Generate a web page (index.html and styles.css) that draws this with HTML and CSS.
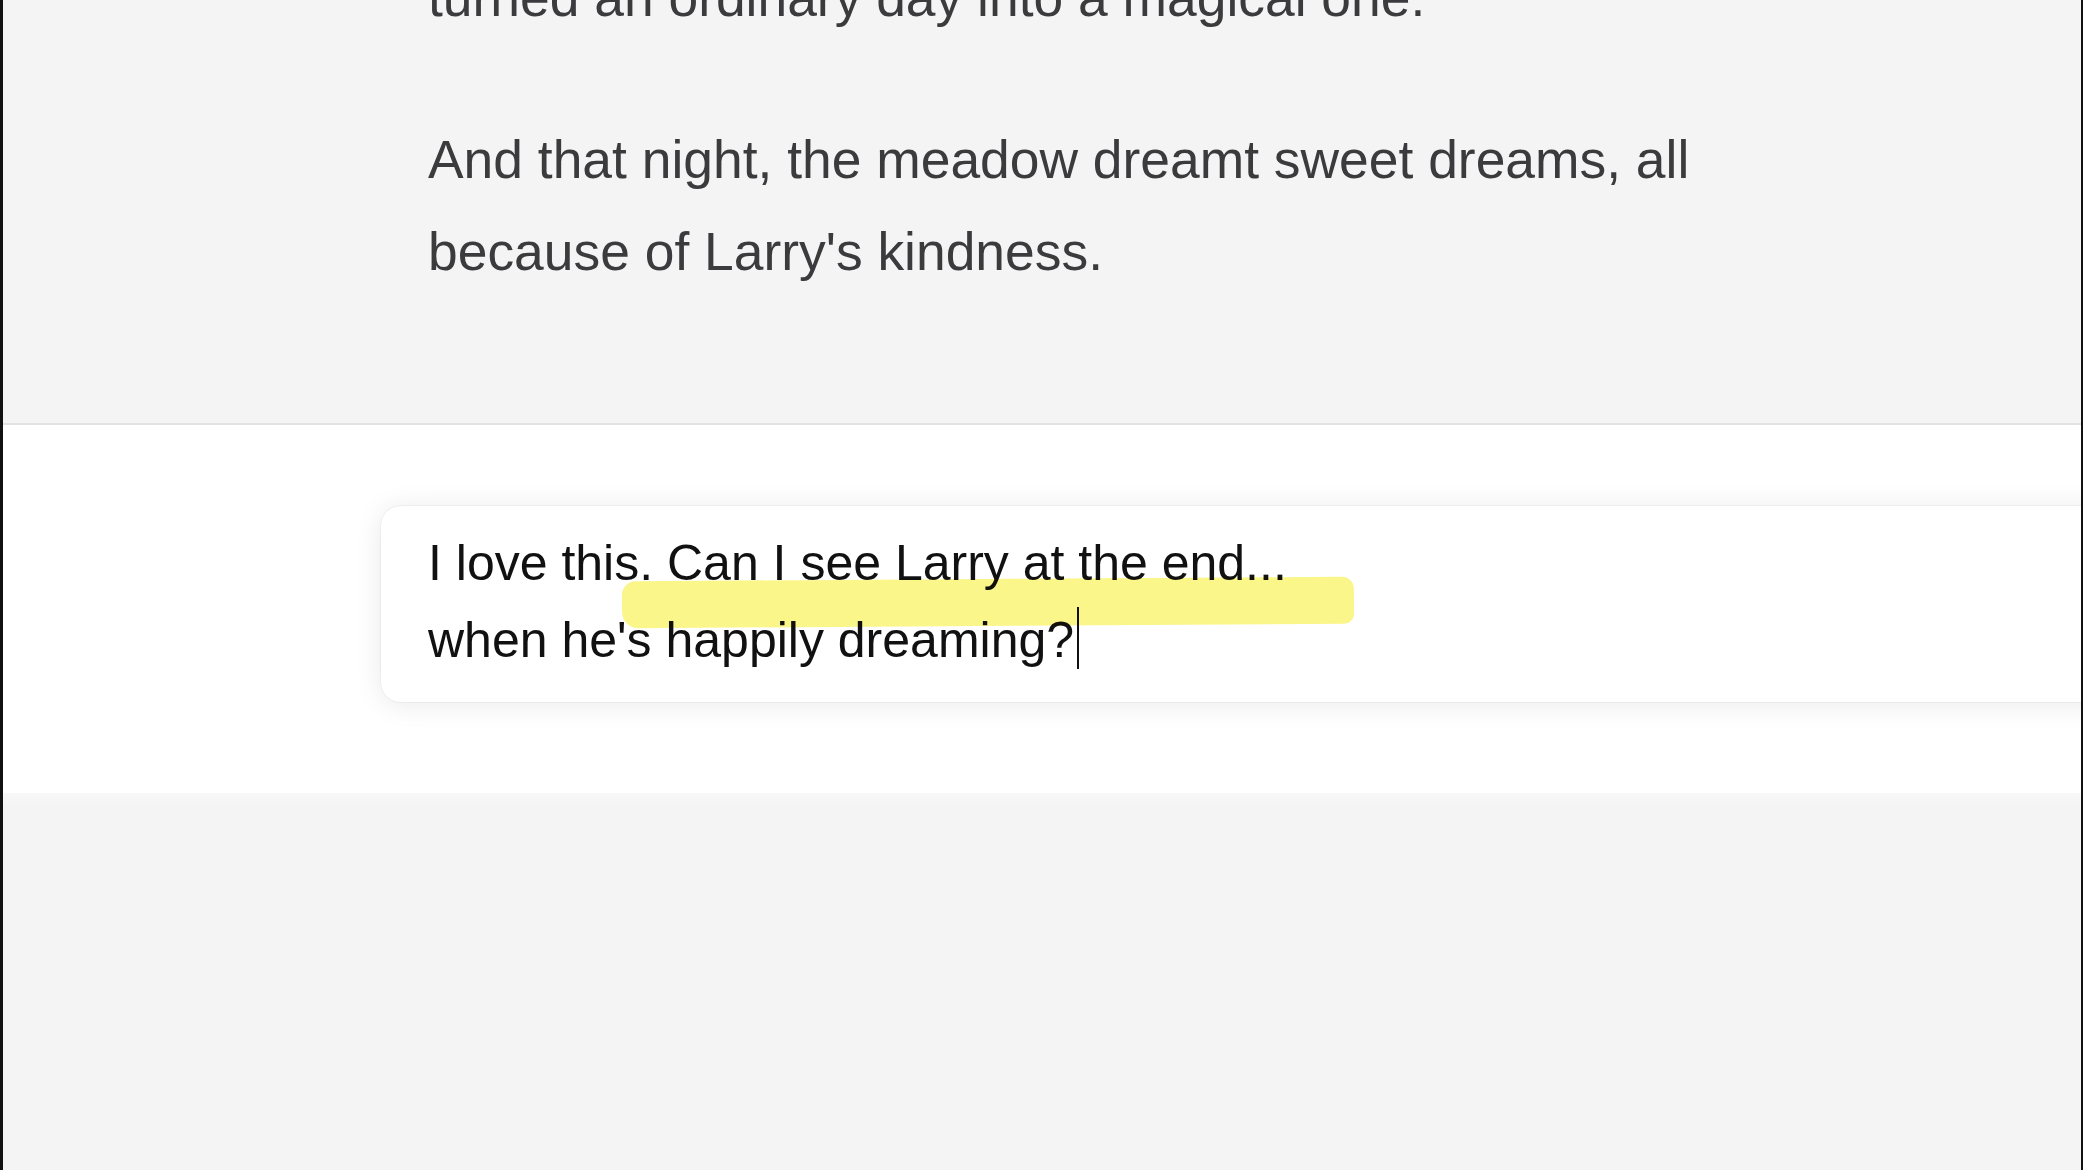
FILE: index.html
```html
<!DOCTYPE html>
<html lang="en">
<head>
<meta charset="utf-8">
<title>Chat</title>
<link rel="stylesheet" href="styles.css">
</head>
<body>
<main class="frame">
  <section class="assistant">
    <div class="msg">
      <p>turned an ordinary day into a magical one.</p>
      <p>And that night, the meadow dreamt sweet dreams, all because of Larry's kindness.</p>
    </div>
  </section>
  <section class="composer">
    <div class="inputbox">
      <div class="typed">I love this. Can I see Larry at the end...<br>when he's happily dreaming?<span class="caret"></span></div>
      <div class="highlight"></div>
    </div>
  </section>
  <section class="footer"></section>
</main>
</body>
</html>
```
FILE: styles.css
```css
html, body {
  margin: 0;
  padding: 0;
  height: 100%;
  overflow: hidden;
  background: #f4f4f4;
}
.frame {
  height: 1170px;
  display: flex;
  flex-direction: column;
  border-left: 3px solid #111;
  border-right: 2px solid #111;
  overflow: hidden;
  font-family: "Liberation Sans", Arial, sans-serif;
}
.assistant {
  background: #f4f4f4;
  padding: 0 0 125px 425px;
  border-bottom: 2px solid #e2e2e2;
}
.msg {
  margin-top: -48px;
  width: 1300px;
  color: #3b3b3e;
  font-size: 53.4px;
  line-height: 92px;
}
.msg p {
  margin: 0 0 70px 0;
}
.msg p:last-child {
  margin-bottom: 0;
}
.composer {
  background: #fff;
  height: 368px;
  padding: 81px 0 0 378px;
  box-sizing: border-box;
  overflow: hidden;
}
.inputbox {
  position: relative;
  height: 196px;
  margin-right: -60px;
  box-sizing: border-box;
  padding: 19px 0 0 47px;
  background: #fff;
  border-radius: 20px;
  box-shadow: 0 0 0 1px rgba(0,0,0,0.035), 0 2px 28px rgba(0,0,0,0.09);
}
.typed {
  position: relative;
  z-index: 1;
  color: #111;
  font-size: 50px;
  line-height: 77px;
}
.caret {
  display: inline-block;
  width: 2px;
  height: 62px;
  background: #111;
  margin-left: 3px;
  vertical-align: -12px;
}
.highlight {
  position: absolute;
  z-index: 2;
  left: 241px;
  top: 73px;
  width: 732px;
  height: 47px;
  border-radius: 14px 12px 10px 16px;
  background: #fbf57c;
  mix-blend-mode: multiply;
  opacity: 0.9;
  transform: rotate(-0.35deg);
}
.footer {
  flex: 1;
  background: linear-gradient(#f8f8f8, #f4f4f4 14px);
}
```
